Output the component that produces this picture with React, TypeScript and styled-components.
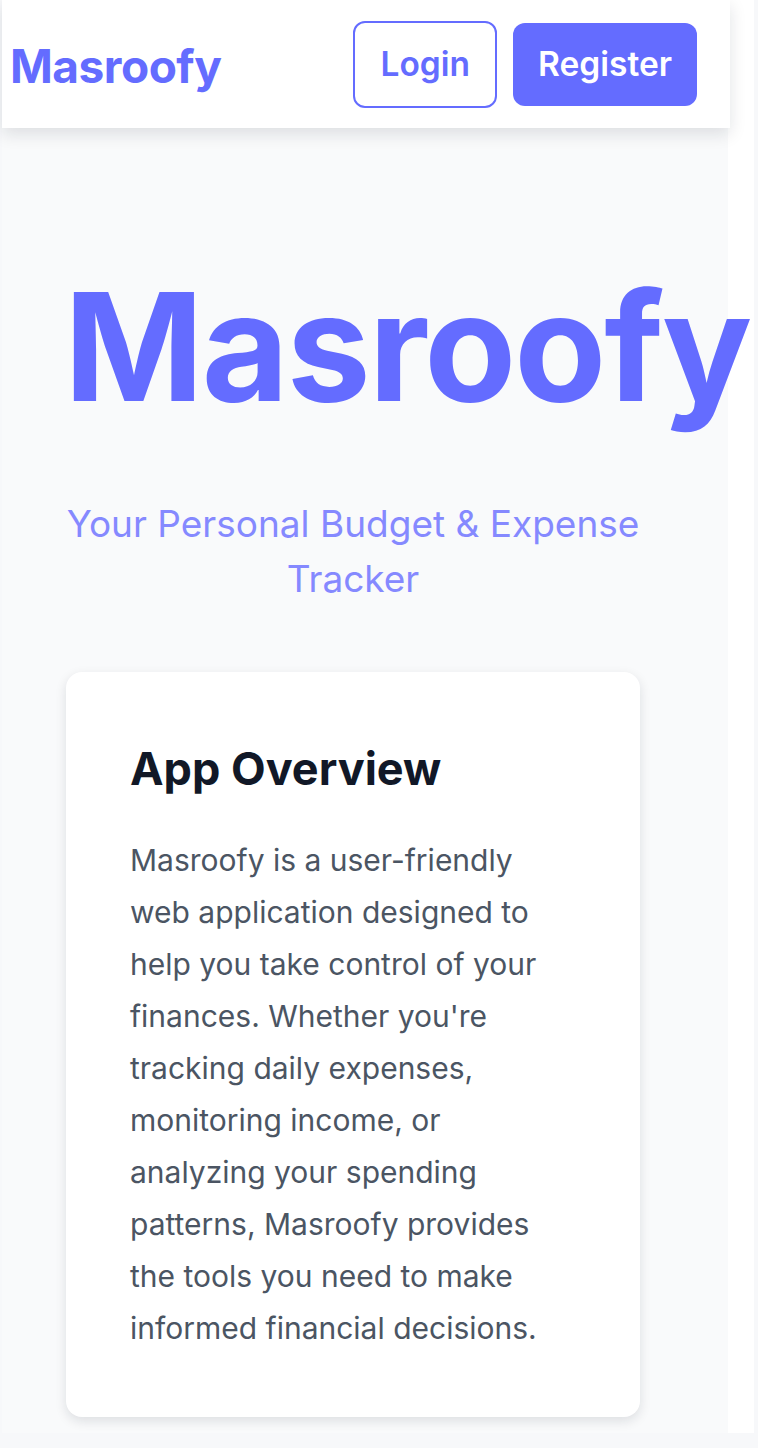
import React from "react";
import styled, { createGlobalStyle } from "styled-components";

const Global = createGlobalStyle`
  html, body {
    margin: 0;
    padding: 0;
    background: #f7f8fa;
    font-family: Inter, "Noto Sans", "Liberation Sans", sans-serif;
  }
  * { box-sizing: border-box; }
`;

const Frame = styled.div`
  width: 752px;
  margin-left: 2px;
  background: #ffffff;
`;

const Page = styled.div`
  width: 726px;
  background: #f9fafb;
  padding-bottom: 16px;
`;

const Nav = styled.nav`
  height: 128px;
  width: 728px;
  background: #ffffff;
  display: flex;
  align-items: center;
  justify-content: space-between;
  padding: 0 33px 0 8px;
  box-shadow: 0 6px 16px rgba(17, 24, 39, 0.12);
  position: relative;
  z-index: 1;
`;

const Logo = styled.div`
  margin-top: 3px;
  font-size: 46px;
  font-weight: 700;
  color: #646cff;
  letter-spacing: -0.5px;
`;

const Actions = styled.div`
  display: flex;
  align-items: center;
  gap: 16px;
`;

const Button = styled.button<{ $primary?: boolean }>`
  font-family: inherit;
  font-size: 33.5px;
  font-weight: 600;
  line-height: 39px;
  border-radius: 12px;
  cursor: pointer;
  padding: 22px 25px;
  color: ${(p) => (p.$primary ? "#ffffff" : "#646cff")};
  background: ${(p) => (p.$primary ? "#646cff" : "#ffffff")};
  border: ${(p) => (p.$primary ? "none" : "2px solid #646cff")};
`;

const Hero = styled.main`
  width: 574px;
  margin-left: 64px;
  padding-top: 136px;
  text-align: center;
`;

const Title = styled.h1`
  margin: 0 0 0 -2px;
  font-size: 150px;
  line-height: 1.1;
  font-weight: 700;
  color: #646cff;
  letter-spacing: -2px;
  white-space: nowrap;
  text-align: left;
`;

const Subtitle = styled.p`
  margin: 67px 0 66px;
  font-size: 37px;
  line-height: 55px;
  color: #8589ff;
`;

const Card = styled.section`
  background: #ffffff;
  border-radius: 16px;
  padding: 64px 64px 63px;
  text-align: left;
  box-shadow: 0 4px 12px rgba(17, 24, 39, 0.12);
`;

const CardTitle = styled.h2`
  margin: 0 0 32px;
  font-size: 45px;
  font-weight: 650;
  line-height: 66px;
  color: #111827;
`;

const CardText = styled.p`
  margin: 0;
  max-width: 425px;
  font-size: 30px;
  line-height: 52px;
  color: #4b5563;
`;

export default function App() {
  return (
    <>
      <Global />
      <Frame>
        <Page>
          <Nav>
            <Logo>Masroofy</Logo>
            <Actions>
              <Button>Login</Button>
              <Button $primary>Register</Button>
            </Actions>
          </Nav>
          <Hero>
            <Title>Masroofy</Title>
            <Subtitle>Your Personal Budget &amp; Expense Tracker</Subtitle>
            <Card>
              <CardTitle>App Overview</CardTitle>
              <CardText>
                Masroofy is a user-friendly web application designed to help you take control of your
                finances. Whether you're tracking daily expenses, monitoring income, or analyzing your
                spending patterns, Masroofy provides the tools you need to make informed financial
                decisions.
              </CardText>
            </Card>
          </Hero>
        </Page>
      </Frame>
    </>
  );
}
